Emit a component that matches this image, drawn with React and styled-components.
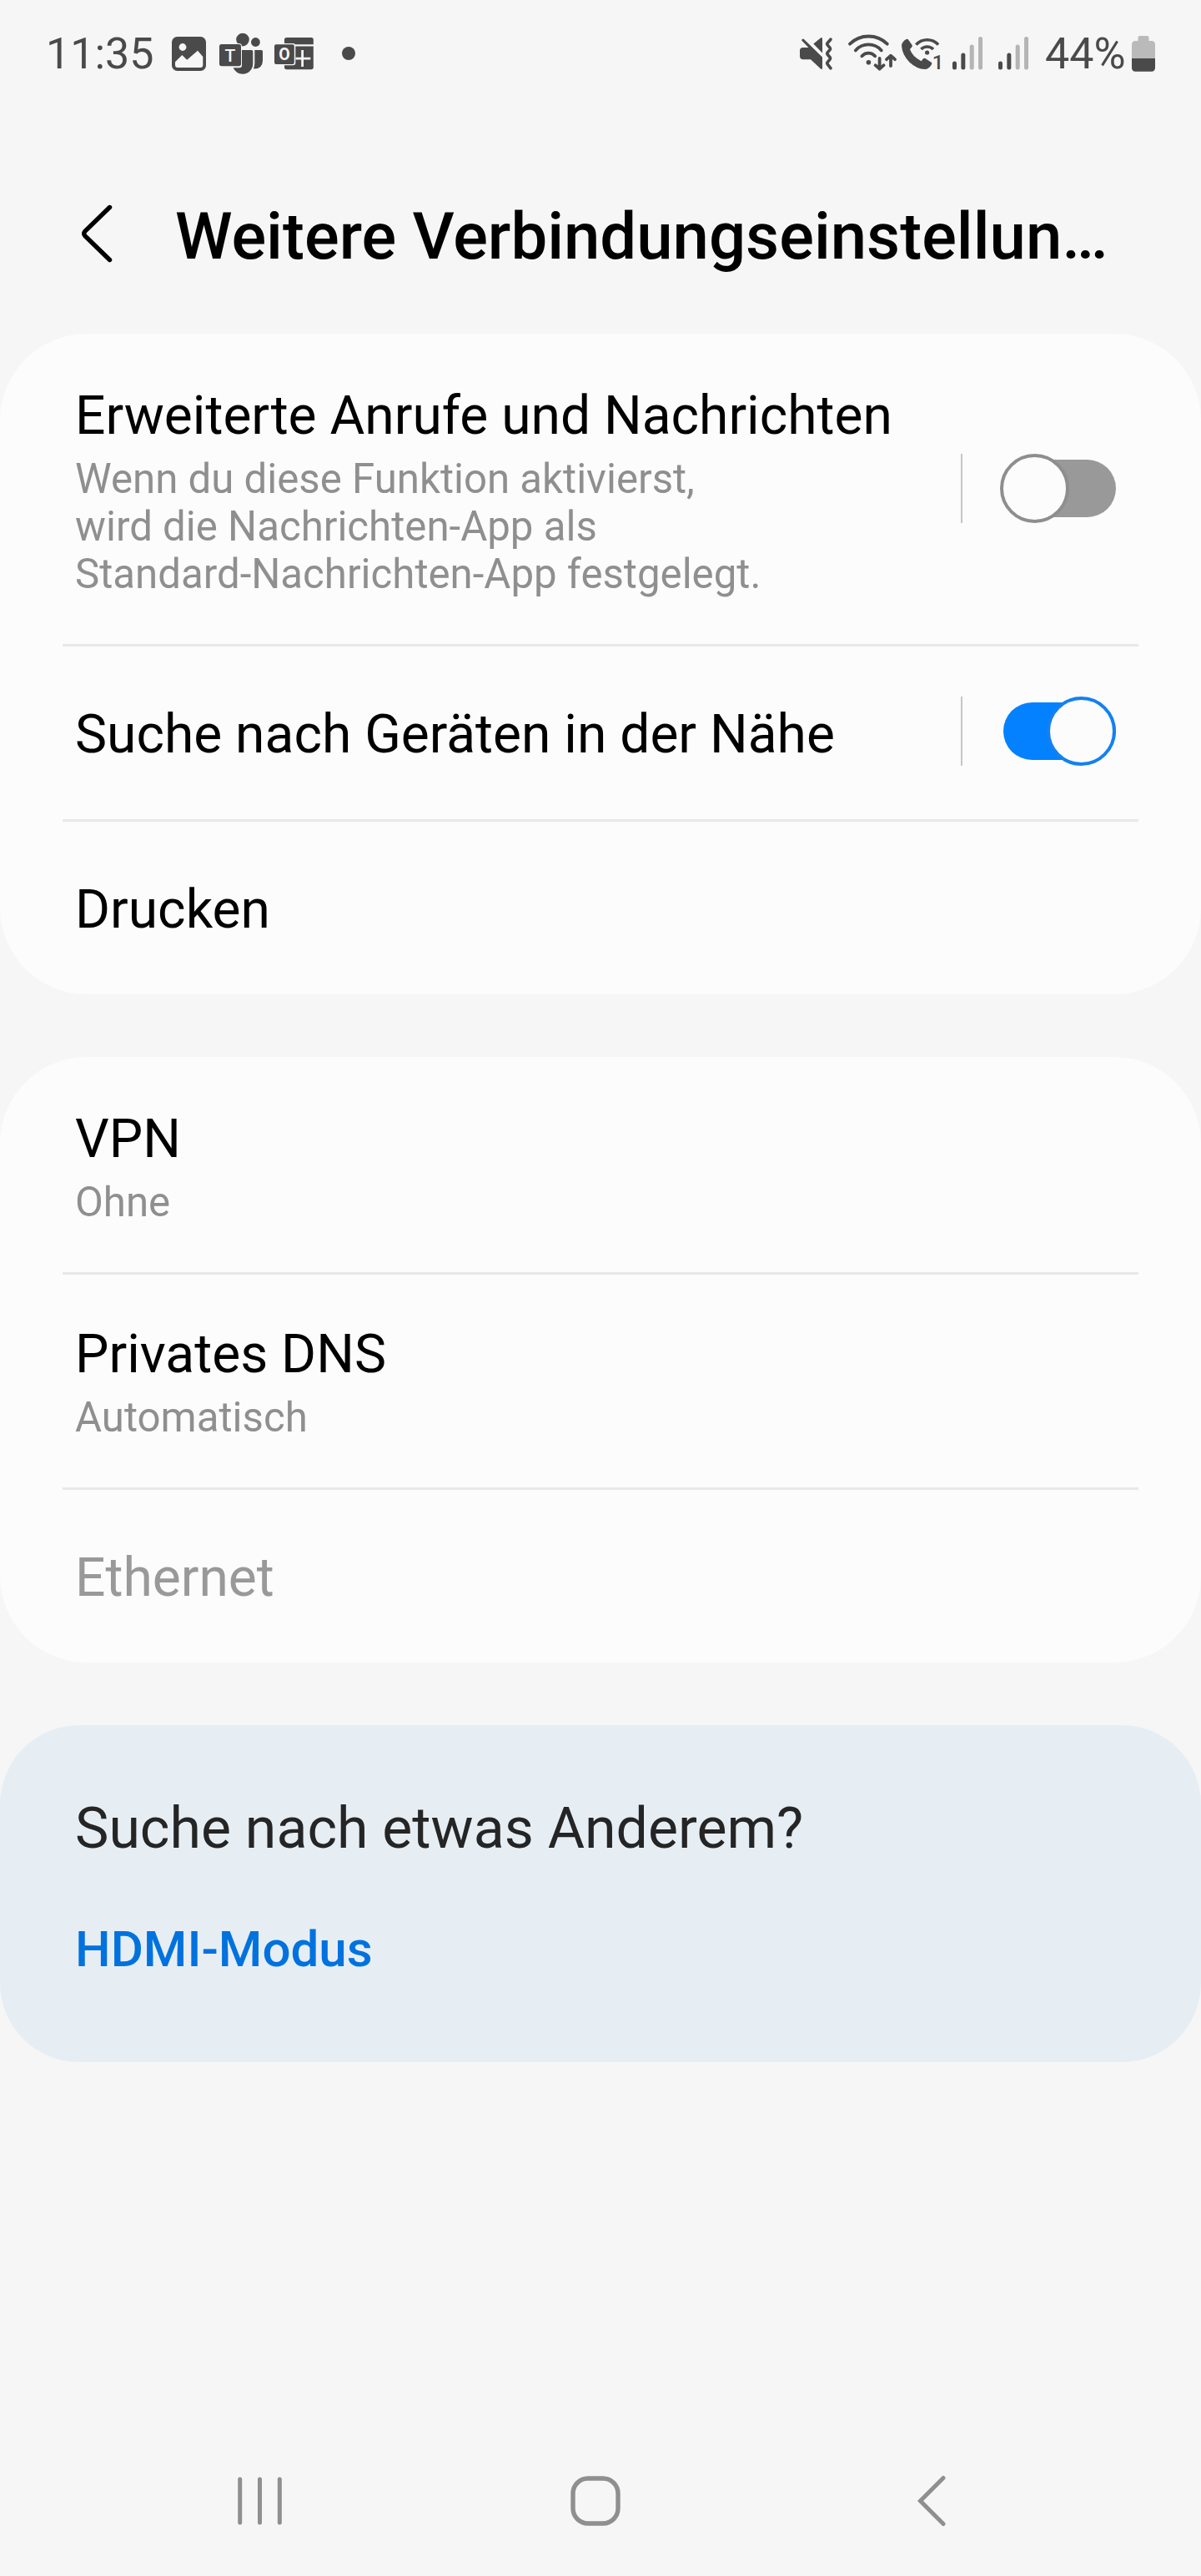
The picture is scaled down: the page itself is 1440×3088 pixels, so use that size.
import React from "react";
import styled, { createGlobalStyle } from "styled-components";

const INK = "#4a4a4a";
const PAGE = "#f6f6f6";

const GlobalStyle = createGlobalStyle`
  * { box-sizing: border-box; }
  body { margin: 0; background: ${PAGE}; }
`;

const Screen = styled.div`
  display: flex;
  flex-direction: column;
  width: 1440px;
  height: 3088px;
  overflow: hidden;
  background: ${PAGE};
  color: #000;
  font-family: Roboto, "Liberation Sans", sans-serif;
`;

const StatusBar = styled.header`
  display: flex;
  justify-content: space-between;
  align-items: center;
  height: 128px;
  padding: 0 55px;
  color: ${INK};
  font-size: 52px;
  line-height: 61px;
`;

const StatusGroup = styled.div`
  display: flex;
  align-items: center;
  svg { display: block; flex: none; overflow: visible; }
`;

const Clock = styled.span`
  width: 151px;
`;

const Percent = styled.span`
  width: 104px;
  margin-left: 19px;
`;

const Slot = styled.span`
  margin-left: ${(p) => p.$gap}px;
`;

const TitleBar = styled.div`
  display: flex;
  align-items: center;
  height: 272px;
  padding: 38px 100px 0 95px;
`;

const BackButton = styled.button`
  display: flex;
  flex: none;
  width: 115px;
  padding: 0 0 7px;
  border: 0;
  background: none;
`;

const Title = styled.h1`
  flex: 1;
  min-width: 0;
  margin: 0;
  padding-top: 2px;
  white-space: nowrap;
  font-size: 77.9px;
  font-weight: 500;
  line-height: 100px;
`;

const Sections = styled.main`
  display: flex;
  flex: 1;
  flex-direction: column;
  gap: 75px;
`;

const Card = styled.section`
  padding: 0 75px;
  border-radius: 104px;
  background: #fcfcfc;
`;

const Row = styled.div`
  display: flex;
  align-items: center;
  height: ${(p) => p.$height}px;
  padding: 0 27px 0 15px;
  & + & { box-shadow: inset 0 3px 0 #e8e8e8; }
`;

const RowText = styled.div`
  flex: 1;
  padding-top: 7px;
`;

const RowTitle = styled.div`
  color: ${(p) => (p.$disabled ? "#999" : "#000")};
  font-size: 64.1px;
  line-height: 74px;
`;

const RowNote = styled.div`
  margin-top: 10px;
  color: #8f8f8f;
  font-size: 49.2px;
  line-height: 57px;
`;

const SwitchArea = styled.div`
  display: flex;
  align-items: center;
  height: 83px;
  margin-bottom: 1px;
  padding-left: 45px;
  border-left: 2px solid #c6c6c6;
`;

const Track = styled.div`
  display: flex;
  align-items: center;
  justify-content: ${(p) => (p.$on ? "flex-end" : "flex-start")};
  width: 135px;
  height: 69px;
  margin-left: 4px;
  border-radius: 35px;
  background: ${(p) => (p.$on ? "#0381fe" : "#999")};
`;

const Thumb = styled.div`
  flex: none;
  width: 83px;
  height: 83px;
  margin-left: ${(p) => (p.$on ? 0 : -4)}px;
  border: 4px solid ${(p) => (p.$on ? "#1580f0" : "#8e8e8e")};
  border-radius: 50%;
  background: #fcfcfc;
`;

const SuggestionCard = styled(Card)`
  height: 404px;
  padding: 84px 90px 0;
  border-radius: 95px;
  background: #e6eef4;
`;

const SuggestionTitle = styled.div`
  color: #252525;
  font-size: 68px;
  line-height: 80px;
`;

const SuggestionLink = styled.div`
  margin-top: 70px;
  color: #0072de;
  font-size: 60.1px;
  font-weight: 500;
  line-height: 70px;
`;

const NavBar = styled.nav`
  display: flex;
  justify-content: space-between;
  align-items: center;
  height: 181px;
  padding: 0 305px 0 284px;
`;

const HomeButton = styled.span`
  display: flex;
  margin-right: 12px;
`;

const ImageIcon = () => (
  <svg width="41" height="41" viewBox="0 0 41 41">
    <rect width="41" height="41" rx="6.5" fill={INK} />
    <circle cx="13" cy="12.5" r="4.4" fill={PAGE} />
    <path
      d="M4 30.3L12.3 22L18.2 27.8L31 16.8L37.3 24V34Q37.3 37 34.3 37H7Q4 37 4 34Z"
      fill={PAGE}
    />
  </svg>
);

const TeamsIcon = () => (
  <svg width="52" height="49" viewBox="0 0 52 49" fill={INK}>
    <circle cx="28" cy="7.6" r="7.8" />
    <circle cx="43.4" cy="10.5" r="5.4" />
    <path d="M27 20H38.5Q40.3 20 40.3 21.8V36A12.3 12.5 0 0 1 28 48.7Q20 48.5 16.6 41.2H24Q27 41.2 27 38Z" />
    <path d="M42.3 20H50.2Q52 20 52 21.8V33Q51.5 42.5 42 42.6L41 42.2Q42.3 39 42.3 35.5Z" />
    <rect x="-1" y="12" width="28" height="28.4" rx="3.6" fill={PAGE} />
    <rect y="13" width="26" height="26.2" rx="2.6" />
    <text x="12.9" y="33.8" textAnchor="middle" fontSize="21" fontWeight="500" fill={PAGE}>
      T
    </text>
  </svg>
);

const OutlookIcon = () => (
  <svg width="47" height="39" viewBox="0 0 47 39" fill={INK}>
    <path d="M12 8.3V2.6Q12 0 14.6 0H44.2Q46.8 0 46.8 2.6V8.3Z" />
    <path d="M12 10.4H46.8V35.6Q46.8 38.2 44.2 38.2H14.6Q12 38.2 12 35.6Z" />
    <path d="M33.6 15V35M25.5 25.2H43.3" stroke={PAGE} strokeWidth="2.8" />
    <rect x="-1" y="7" width="26.3" height="26.3" rx="3" fill={PAGE} />
    <rect y="8.3" width="23.8" height="23.8" rx="2" />
    <text x="11.9" y="27" textAnchor="middle" fontSize="19.5" fontWeight="700" fill={PAGE}>
      O
    </text>
  </svg>
);

const DotIcon = () => (
  <svg width="16" height="16" viewBox="0 0 16 16">
    <circle cx="8" cy="8" r="8" fill={INK} />
  </svg>
);

const MuteIcon = () => (
  <svg width="39" height="39" viewBox="0 0 39 39" fill={INK}>
    <path d="M2.2 3.6Q2 1.4 4.4 1.4L27 23.4V37Q26.6 38.6 25 37.6L13 26.2H4Q0 26 0 22.5V15.5Q0 12 4 12H10.4Z" />
    <path d="M16.3 7.6L25 .4Q27 -.6 27 1.6V18.4Z" />
    <path
      d="M37 2.2L32.8 7Q32.4 7.8 33 8.6L36.3 12.6Q36.9 13.6 36.3 14.4L33 18.2Q32.4 19.1 33 20L36.3 24Q36.9 25 36.3 25.8L33 29.8Q32.4 30.8 33 31.6L37 36.8"
      fill="none"
      stroke={INK}
      strokeWidth="3.6"
      strokeLinecap="round"
      strokeLinejoin="round"
    />
  </svg>
);

const WifiIcon = () => (
  <svg
    width="58"
    height="49"
    viewBox="0 0 58 49"
    fill="none"
    stroke={INK}
    strokeWidth="3.8"
    strokeLinecap="round"
    strokeLinejoin="round"
  >
    <path d="M2 12.7A31.9 31.9 0 0 1 46.8 12.7M8.8 20.4A20.7 20.7 0 0 1 39.8 20.4M16.4 27.3A10.5 10.5 0 0 1 32.2 27.3" />
    <circle cx="24.4" cy="34.7" r="2.8" fill={INK} stroke="none" />
    <path d="M37.6 30V42.5M32.6 38.2L37.6 42.7L42.6 38.2M51 39V27.5M46 31.2L51 26.7L56 31.2" />
  </svg>
);

const WifiCallIcon = () => (
  <svg width="47" height="39" viewBox="0 0 47 39" fill={INK}>
    <path d="M0 9.5Q.4 5 5.6 2Q7.2 1.3 8.2 2.8L12.6 9Q13.4 10.4 12.2 11.6L10 14Q13 23 23.6 28.2L25.8 25.4Q26.9 24.2 28.4 25L35.6 29.8Q36.9 30.8 36 32.2Q32.6 37.9 28 38Q18 37.6 9.4 29.4Q.6 20.6 0 9.5Z" />
    <g fill="none" stroke={INK} strokeWidth="3.6">
      <path d="M17.4 8.6A18 18 0 0 1 44 8.6M23.4 14A10.4 10.4 0 0 1 38 14" />
    </g>
    <circle cx="30.6" cy="18" r="2.6" />
    <text x="36.8" y="38" fontSize="24" fontWeight="500">
      1
    </text>
  </svg>
);

const SignalIcon = () => (
  <svg width="37" height="40" viewBox="0 0 37 40">
    {[10, 20, 30, 39.5].map((h, i) => (
      <rect
        key={h}
        x={i * 10.35}
        y={39.5 - h}
        width="5"
        height={h}
        rx="2.5"
        fill={i < 2 ? INK : "#b4b4b4"}
      />
    ))}
  </svg>
);

const BatteryIcon = () => (
  <svg width="28" height="43" viewBox="0 0 28 43">
    <path
      d="M7.5 6V2Q7.5 0 9.5 0H18.5Q20.5 0 20.5 2V6H23.5Q28 6 28 10.5V27H0V10.5Q0 6 4.5 6Z"
      fill="#bababa"
    />
    <path d="M0 27H28V38Q28 42.7 23.5 42.7H4.5Q0 42.7 0 38Z" fill={INK} />
  </svg>
);

const HeaderBackIcon = () => (
  <svg width="42" height="72" viewBox="0 0 42 72" fill="none" stroke="#000">
    <path
      d="M36.5 4.5L6.8 33.4Q4.6 36 6.8 38.6L36.5 67.5"
      strokeWidth="5.4"
      strokeLinecap="round"
    />
  </svg>
);

const RecentsIcon = () => (
  <svg width="56" height="58" viewBox="0 0 56 58">
    <path
      d="M3.7 3V55M27.5 3V55M51.3 3V55"
      stroke="#8f8f8f"
      strokeWidth="5"
      strokeLinecap="round"
    />
  </svg>
);

const HomeIcon = () => (
  <svg width="60" height="60" viewBox="0 0 60 60">
    <rect x="3" y="3" width="54" height="54" rx="18" fill="none" stroke="#8f8f8f" strokeWidth="5.4" />
  </svg>
);

const NavBackIcon = () => (
  <svg width="36" height="62" viewBox="0 0 36 62">
    <path
      d="M32 3.5L4.5 31L32 58.5"
      fill="none"
      stroke="#8f8f8f"
      strokeWidth="5"
      strokeLinecap="round"
      strokeLinejoin="miter"
    />
  </svg>
);

function Switch({ on }) {
  return (
    <SwitchArea>
      <Track $on={on} role="switch" aria-checked={on}>
        <Thumb $on={on} />
      </Track>
    </SwitchArea>
  );
}

function Setting({ title, note, height = 210, disabled, toggle }) {
  return (
    <Row $height={height}>
      <RowText>
        <RowTitle $disabled={disabled}>{title}</RowTitle>
        {note && <RowNote>{note}</RowNote>}
      </RowText>
      {toggle && <Switch on={toggle === "on"} />}
    </Row>
  );
}

export default function App() {
  return (
    <Screen>
      <GlobalStyle />
      <StatusBar>
        <StatusGroup>
          <Clock>11:35</Clock>
          <ImageIcon />
          <Slot $gap={16}><TeamsIcon /></Slot>
          <Slot $gap={14}><OutlookIcon /></Slot>
          <Slot $gap={34}><DotIcon /></Slot>
        </StatusGroup>
        <StatusGroup>
          <MuteIcon />
          <Slot $gap={19}><WifiIcon /></Slot>
          <Slot $gap={6}><WifiCallIcon /></Slot>
          <Slot $gap={14}><SignalIcon /></Slot>
          <Slot $gap={18}><SignalIcon /></Slot>
          <Percent>44%</Percent>
          <BatteryIcon />
        </StatusGroup>
      </StatusBar>

      <TitleBar>
        <BackButton aria-label="Zurück"><HeaderBackIcon /></BackButton>
        <Title>Weitere Verbindungseinstellun…</Title>
      </TitleBar>

      <Sections>
        <Card>
          <Setting
            title="Erweiterte Anrufe und Nachrichten"
            note={
              <>
                Wenn du diese Funktion aktivierst,
                <br />
                wird die Nachrichten-App als
                <br />
                Standard-Nachrichten-App festgelegt.
              </>
            }
            height={372}
            toggle="off"
          />
          <Setting title="Suche nach Geräten in der Nähe" toggle="on" />
          <Setting title="Drucken" />
        </Card>
        <Card>
          <Setting title="VPN" note="Ohne" height={258} />
          <Setting title="Privates DNS" note="Automatisch" height={258} />
          <Setting title="Ethernet" disabled />
        </Card>
        <SuggestionCard>
          <SuggestionTitle>Suche nach etwas Anderem?</SuggestionTitle>
          <SuggestionLink>HDMI-Modus</SuggestionLink>
        </SuggestionCard>
      </Sections>

      <NavBar>
        <RecentsIcon />
        <HomeButton><HomeIcon /></HomeButton>
        <NavBackIcon />
      </NavBar>
    </Screen>
  );
}
